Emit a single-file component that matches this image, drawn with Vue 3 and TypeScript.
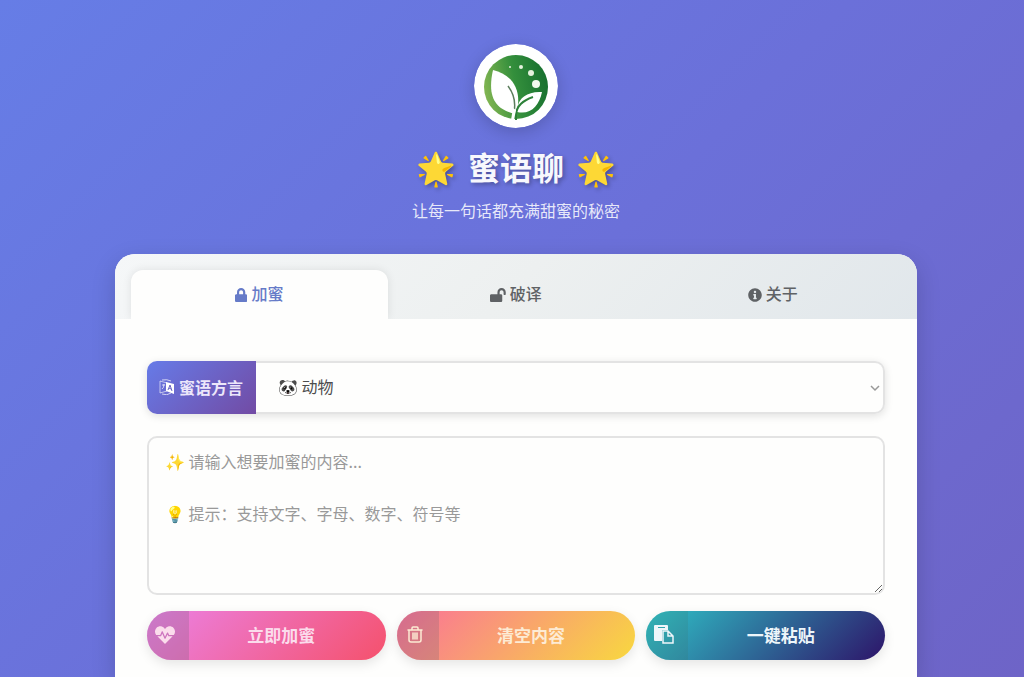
<script setup lang="ts">
import { ref } from 'vue'

interface Tab {
  id: string
  label: string
  viewBox: string
  path: string
}

const tabs: Tab[] = [
  {
    id: 'lock',
    label: '加蜜',
    viewBox: '0 0 448 512',
    path: 'M400 224h-24v-72C376 68.2 307.8 0 224 0S72 68.2 72 152v72H48c-26.5 0-48 21.5-48 48v192c0 26.5 21.5 48 48 48h352c26.5 0 48-21.5 48-48V272c0-26.5-21.5-48-48-48zm-104 0H152v-72c0-39.7 32.3-72 72-72s72 32.3 72 72v72z',
  },
  {
    id: 'open',
    label: '破译',
    viewBox: '0 0 576 512',
    path: 'M423.5 0C339.5.3 272 69.5 272 153.5V224H48c-26.5 0-48 21.5-48 48v192c0 26.5 21.5 48 48 48h352c26.5 0 48-21.5 48-48V272c0-26.5-21.5-48-48-48h-48v-71.1c0-39.6 31.7-72.5 71.3-72.9 40-.4 72.7 32.1 72.7 72v80c0 13.3 10.7 24 24 24h32c13.3 0 24-10.7 24-24v-80C576 68 507.5-.3 423.5 0z',
  },
  {
    id: 'info',
    label: '关于',
    viewBox: '0 0 512 512',
    path: 'M256 8C119 8 8 119 8 256c0 137 111 248 248 248s248-111 248-248C504 119 393 8 256 8zm0 96c25 0 44 19 44 43s-19 43-44 43-44-19-44-43 19-43 44-43zm62 292c0 7-5 12-12 12H206c-7 0-12-5-12-12v-30c0-7 5-12 12-12h14v-78h-14c-7 0-12-5-12-12v-30c0-7 5-12 12-12h74c7 0 12 5 12 12v120h14c7 0 12 5 12 12v30z',
  },
]

const activeTab = ref('lock')
const dialect = ref('animal')
const content = ref('')
const hint = '✨ 请输入想要加蜜的内容...\n\n💡 提示：支持文字、字母、数字、符号等'
</script>

<template>
  <main class="page">
    <header class="hero">
      <svg class="logo" viewBox="0 0 84 84" role="img" aria-label="蜜语聊">
        <defs>
          <linearGradient id="leafDisc" x1="0" y1="0.6" x2="1" y2="0.4">
            <stop offset="0" stop-color="#83b652" />
            <stop offset="0.5" stop-color="#348f3c" />
            <stop offset="1" stop-color="#17702f" />
          </linearGradient>
        </defs>
        <circle cx="42" cy="42" r="42" fill="#fff" />
        <circle cx="42" cy="43" r="32" fill="url(#leafDisc)" />
        <path d="M19 26C35 30 46 41 44 61L41 70C25 66 12 57 19 26Z" fill="#fff" />
        <path d="M68 48C54 47 45 54 44 62L43 68C57 71 65 62 68 48Z" fill="#fff" />
        <path d="M34 42C40 50 42 58 40 68" fill="none" stroke="#5b7d5c" stroke-width="1.5" />
        <path d="M59 53C50 56 43 61 42 70L42 76" fill="none" stroke="#2d8139" stroke-width="2" />
        <path d="M37 76L39 64L42 66L40 76Z" fill="#fff" />
        <circle cx="36" cy="23" r="1" fill="#e6f2df" />
        <circle cx="47" cy="23" r="2" fill="#e6f2df" />
        <circle cx="57" cy="29" r="3" fill="#e6f2df" />
        <circle cx="62" cy="40" r="4" fill="#f2faee" />
      </svg>
      <h1 class="title"><span>🌟</span><span>蜜语聊</span><span>🌟</span></h1>
      <p class="subtitle">让每一句话都充满甜蜜的秘密</p>
    </header>

    <section class="card">
      <nav class="tabs" role="tablist">
        <button
          v-for="tab in tabs"
          :key="tab.id"
          type="button"
          role="tab"
          class="tab"
          :class="{ active: tab.id === activeTab }"
          :aria-selected="tab.id === activeTab"
          @click="activeTab = tab.id"
        >
          <svg class="tab-icon" :viewBox="tab.viewBox" aria-hidden="true">
            <path :d="tab.path" fill="currentColor" />
          </svg>
          <span>{{ tab.label }}</span>
        </button>
      </nav>

      <form class="panel" @submit.prevent>
        <div class="dialect">
          <label class="dialect-label" for="dialect">
            <svg class="lang-icon" viewBox="0 0 16 16" aria-hidden="true">
              <path d="M1 2L8 4V12L1 14Z" fill="none" stroke="#fff" stroke-opacity="0.6" />
              <path d="M3 1Q8 0 12 2M3 15Q8 17 12 14M3 6H6M5 5Q5 9 3 10" fill="none" stroke="#fff" stroke-opacity="0.7" />
              <path d="M7 3L15 5V15L7 12Z" fill="#fff" />
              <path d="M9 11L11 6L13 12M10 9L12 10" fill="none" stroke="#6762c4" />
            </svg>
            <span>蜜语方言</span>
          </label>
          <div class="select-wrap">
            <select id="dialect" v-model="dialect" class="select">
              <option value="animal">🐼 动物</option>
            </select>
            <svg class="chevron" viewBox="0 0 12 8" aria-hidden="true">
              <path d="M2 2L6 6L10 2" fill="none" stroke="#999" stroke-width="1.5" />
            </svg>
          </div>
        </div>

        <textarea v-model="content" class="content" :placeholder="hint" aria-label="加蜜内容"></textarea>

        <div class="actions">
          <button type="submit" class="action pink">
            <span class="action-icon">
              <svg class="glyph" viewBox="0 0 512 512" aria-hidden="true">
                <path
                  fill="currentColor"
                  d="M320.2 243.8l-49.7 99.4c-6 12.1-23.4 11.7-28.9-.6l-56.9-126.3-30 71.7H60.6l182.5 186.5c7.1 7.3 18.6 7.3 25.7 0L451.4 288H342.3l-22.1-44.2zM473.7 73.9l-2.4-2.5c-51.5-52.6-135.8-52.6-187.4 0L256 100l-27.9-28.5c-51.5-52.7-135.9-52.7-187.4 0l-2.4 2.4C-10.4 123.7-12.5 203 31 256h102.4l35.9-86.2c5.4-12.9 23.6-13.2 29.4-.4l58.2 129.3 49-97.9c5.9-11.8 22.7-11.8 28.6 0l27.6 55.2H481c43.5-53 41.4-132.3-7.3-182.1z"
                />
              </svg>
            </span>
            <span class="action-text">立即加蜜</span>
          </button>
          <button type="button" class="action orange" @click="content = ''">
            <span class="action-icon">
              <svg class="glyph" viewBox="0 0 20 20" aria-hidden="true">
                <path
                  d="M3 5H17M7 5V3Q7 2 8 2H12Q13 2 13 3V5M4 5V15Q4 17 6 17H14Q16 17 16 15V5M8 8V14M10 8V14M12 8V14"
                  fill="none"
                  stroke="currentColor"
                  stroke-width="1.5"
                  stroke-linecap="round"
                />
              </svg>
            </span>
            <span class="action-text">清空内容</span>
          </button>
          <button type="button" class="action teal">
            <span class="action-icon">
              <svg class="glyph" viewBox="0 0 20 20" aria-hidden="true">
                <path d="M1 0H13Q14 0 14 1V5H9Q8 5 8 6V16H1Q0 16 0 15V1Q0 0 1 0ZM4 2V3H11V2Z" fill="currentColor" fill-rule="evenodd" />
                <path d="M9 6H14L19 11V18H9ZM14 6V11H19" fill="none" stroke="currentColor" stroke-width="1.5" />
              </svg>
            </span>
            <span class="action-text">一键粘贴</span>
          </button>
        </div>
      </form>
    </section>
  </main>
</template>

<style>
body {
  margin: 0;
}
</style>

<style scoped>
* {
  box-sizing: border-box;
}

.page {
  display: flex;
  flex-direction: column;
  align-items: center;
  min-height: 100vh;
  padding: 44px 16px 0 24px;
  background: linear-gradient(135deg, #667de6 0%, #6b70d9 50%, #6e64c7 100%);
  font-family: "Noto Sans CJK SC", "Noto Color Emoji", sans-serif;
  font-size: 16px;
}

.hero {
  display: flex;
  flex-direction: column;
  align-items: center;
  color: #fff;
  text-align: center;
}

.logo {
  width: 84px;
  height: 84px;
  border-radius: 50%;
  box-shadow: 0 4px 16px rgba(0, 0, 0, 0.18);
}

.title {
  display: flex;
  gap: 12px;
  margin: 14px 0 0;
  font-size: 32px;
  line-height: 48px;
  font-weight: 700;
  color: #f8f8fd;
  text-shadow: 2px 2px 4px rgba(0, 0, 0, 0.3);
}

.subtitle {
  margin: 8px 0 0;
  line-height: 24px;
  color: rgba(255, 255, 255, 0.85);
}

.card {
  display: flex;
  flex: 1;
  flex-direction: column;
  width: 100%;
  max-width: 802px;
  margin-top: 32px;
  overflow: hidden;
  border-radius: 20px 20px 0 0;
  background: #fefefd;
  box-shadow: 0 8px 24px rgba(0, 0, 0, 0.16);
}

.tabs {
  display: grid;
  grid-template-columns: repeat(3, 1fr);
  padding: 16px 16px 0;
  overflow: hidden;
  background: linear-gradient(135deg, #f5f7f8 0%, #edf0f0 50%, #e1e7eb 100%);
}

.tab {
  display: flex;
  align-items: center;
  justify-content: center;
  gap: 4px;
  height: 49px;
  padding: 0 0 4px;
  border: 0;
  border-radius: 12px 12px 0 0;
  background: transparent;
  color: #5f6265;
  font-family: inherit;
  font-size: 16px;
  font-weight: 500;
  cursor: pointer;
}

.tab.active {
  background: #fefefd;
  color: #667bc8;
  box-shadow: 0 0 10px rgba(0, 0, 0, 0.09);
}

.tab-icon {
  width: auto;
  height: 14px;
  margin-top: 4px;
}

.panel {
  display: flex;
  flex-direction: column;
  padding: 42px 32px 16px;
}

.dialect {
  display: flex;
  height: 53px;
  border-radius: 10px;
  box-shadow: 0 2px 8px rgba(0, 0, 0, 0.12);
}

.dialect-label {
  display: flex;
  flex: none;
  align-items: center;
  gap: 4px;
  padding: 0 13px 2px 12px;
  border-radius: 10px 0 0 10px;
  background: linear-gradient(135deg, #667be8, #724ba4);
  color: #ece6fa;
  font-weight: 700;
}

.lang-icon {
  width: 16px;
  height: 16px;
}

.select-wrap {
  position: relative;
  flex: 1;
}

.select {
  width: 100%;
  height: 100%;
  padding: 0 32px 4px 22px;
  border: 2px solid #e3e3e3;
  border-left: 0;
  border-radius: 0 10px 10px 0;
  background: #fefefd;
  color: #4d4d4d;
  font-family: inherit;
  font-size: 16px;
  appearance: none;
}

.chevron {
  position: absolute;
  top: 50%;
  right: 4px;
  width: 12px;
  height: 8px;
  margin-top: -4px;
  pointer-events: none;
}

.content {
  display: block;
  width: 100%;
  height: 159px;
  margin-top: 22px;
  padding: 10px 16px;
  border: 2px solid #e3e3e3;
  border-radius: 10px;
  background: #fefefd;
  color: #4d4d4d;
  font-family: inherit;
  font-size: 16px;
  line-height: 26px;
  resize: vertical;
}

.content::placeholder {
  color: #999;
}

.actions {
  display: grid;
  grid-template-columns: repeat(3, 1fr);
  gap: 11px;
  margin-top: 16px;
}

.action {
  display: flex;
  height: 49px;
  padding: 0;
  overflow: hidden;
  border: 0;
  border-radius: 25px;
  font-family: inherit;
  font-size: 17px;
  font-weight: 700;
  box-shadow: 0 4px 12px rgba(0, 0, 0, 0.1);
  cursor: pointer;
}

.pink {
  background: linear-gradient(135deg, #eb82e6, #f5516c);
  color: #fbdcec;
}

.orange {
  background: linear-gradient(135deg, #fa709a, #f8d83f);
  color: #fdebd4;
}

.teal {
  background: linear-gradient(135deg, #2fc3c8, #2d1469);
  color: #eef6fa;
}

.action-icon {
  display: flex;
  flex: none;
  align-items: center;
  justify-content: center;
  width: 42px;
  height: 100%;
  padding: 0 6px 2px 0;
  background: rgba(90, 90, 110, 0.22);
}

.teal .action-icon {
  background: rgba(60, 120, 110, 0.2);
}

.glyph {
  width: 20px;
  height: 20px;
}

.action-text {
  flex: 1;
  align-self: center;
  padding: 0 12px 2px 0;
}
</style>
